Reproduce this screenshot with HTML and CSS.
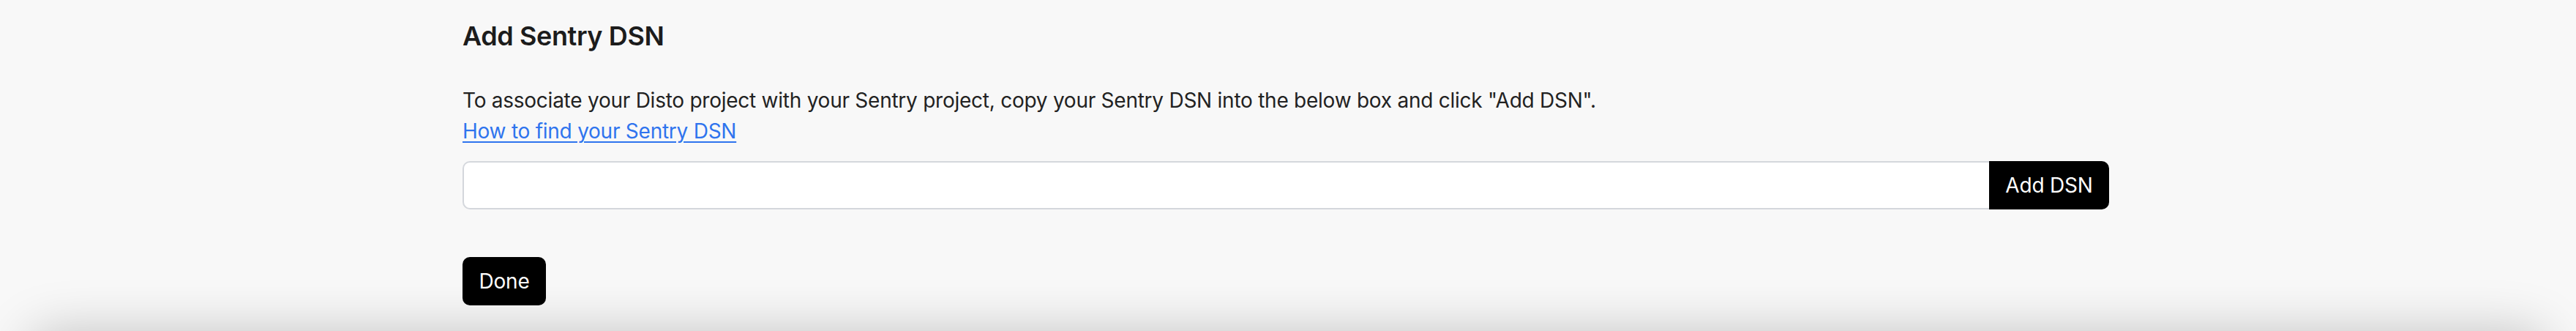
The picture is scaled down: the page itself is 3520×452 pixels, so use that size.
FILE: index.html
```html
<!DOCTYPE html>
<html>
<head>
<meta charset="utf-8">
<link rel="stylesheet" href="styles.css">
</head>
<body>
<main class="page">
  <section class="content">
    <h2 class="title">Add Sentry DSN</h2>
    <p class="desc">To associate your Disto project with your Sentry project, copy your Sentry DSN into the below box and click "Add DSN".<br><a class="link" href="#">How to find your Sentry DSN</a></p>
    <form class="dsn-row">
      <input class="dsn-input" type="text">
      <button class="btn btn-add" type="button">Add DSN</button>
    </form>
    <button class="btn btn-done" type="button">Done</button>
  </section>
  <div class="next-card"></div>
</main>
</body>
</html>
```
FILE: styles.css
```css
html, body {
  margin: 0;
  padding: 0;
  background: #f8f8f8;
  height: 100%;
  overflow: hidden;
}
body {
  font-family: Inter, "Liberation Sans", sans-serif;
  color: #202020;
}
.page {
  display: flex;
  flex-direction: column;
}
.content {
  width: 2256px;
  margin: 0 auto;
  padding-top: 22px;
}
.title {
  margin: 0;
  font-size: 36px;
  line-height: 54px;
  font-weight: 600;
  letter-spacing: -0.4px;
  color: #1c1c1c;
}
.desc {
  margin: 40px 0 0;
  font-size: 28px;
  line-height: 42px;
  letter-spacing: -0.25px;
  color: #222;
}
.link {
  color: #2f74ee;
  text-decoration: underline;
  text-underline-offset: 4px;
  text-decoration-thickness: 2px;
}
.dsn-row {
  display: flex;
  width: 2250px;
  margin: 20px 0 0;
}
.dsn-input {
  flex: 1;
  height: 66px;
  box-sizing: border-box;
  border: 2px solid #d4d7dc;
  border-right: none;
  border-radius: 10px 0 0 10px;
  background: #fff;
  font: inherit;
  font-size: 28px;
  padding: 0 16px;
  outline: none;
}
.btn {
  font-family: Inter, "Liberation Sans", sans-serif;
  font-size: 28px;
  line-height: 42px;
  letter-spacing: -0.2px;
  background: #000;
  color: #fff;
  border: none;
  padding: 12px 24px;
  cursor: pointer;
}
.btn-add {
  width: 164px;
  height: 66px;
  border-radius: 0 10px 10px 0;
  padding: 0;
}
.btn-done {
  display: block;
  margin-top: 65px;
  width: 114px;
  height: 66px;
  padding: 0;
  border-radius: 10px;
}
.next-card {
  margin: 36px 40px 0;
  height: 300px;
  background: #f8f8f8;
  border-radius: 30px;
  box-shadow: 0 0 70px rgba(0, 0, 0, 0.22);
}
```
